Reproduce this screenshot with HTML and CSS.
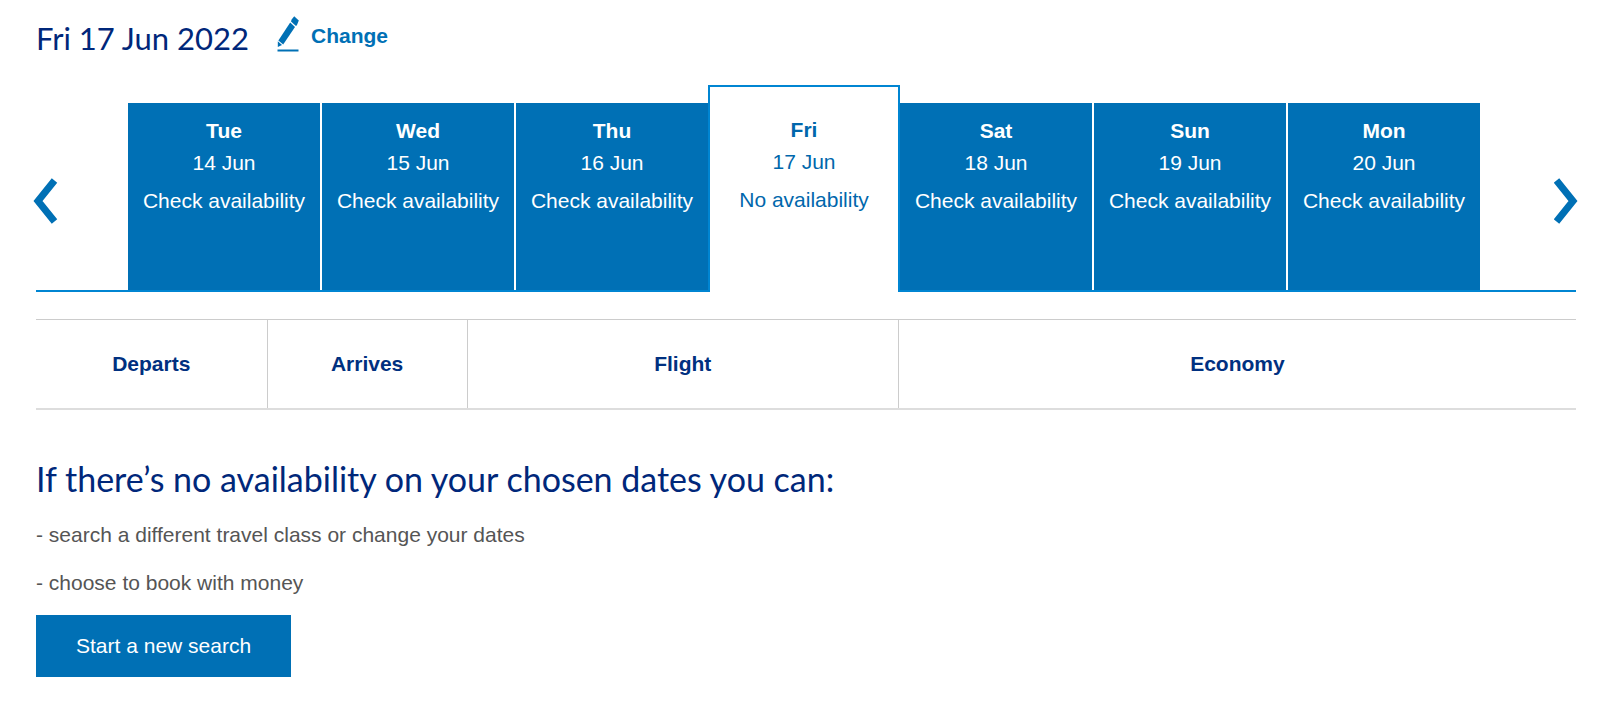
FILE: index.html
```html
<!DOCTYPE html>
<html lang="en">
<head>
  <meta charset="UTF-8">
  <meta name="viewport" content="width=device-width, initial-scale=1.0">
  <title>Flight availability</title>
  <link rel="stylesheet" href="styles.css">
</head>
<body>
  <main class="page">
    <header class="date-header">
      <h1>Fri 17 Jun 2022</h1>
      <a href="#" class="change-link">
        <svg class="icon-edit" width="24" height="36" viewBox="0 0 24 36" aria-hidden="true">
          <path d="M17.2 0.3 L21.8 4.5 L19.8 9.4 L18.6 9.8 L14 5.6 L14.6 3.6 Z"/>
          <path d="M13.2 6.6 L18 11 L6.2 28.6 L1.4 24.4 Z"/>
          <path d="M0.8 25.2 L5 29 L0.8 31 Z"/>
          <path d="M0.5 33.5 H21.5 V35.5 H0.5 Z"/>
        </svg>
        <span>Change</span>
      </a>
    </header>

    <nav class="date-nav" aria-label="Dates">
      <button type="button" class="arrow arrow-prev" aria-label="Previous dates">
        <svg width="25" height="46" viewBox="0 0 25 46"><path d="M21.5 2.5 L5 23 L21.5 43.5"/></svg>
      </button>
      <div class="days">
        <button type="button" class="day">
          <strong>Tue</strong>
          <span>14 Jun</span>
          <span class="status">Check availability</span>
        </button>
        <button type="button" class="day">
          <strong>Wed</strong>
          <span>15 Jun</span>
          <span class="status">Check availability</span>
        </button>
        <button type="button" class="day">
          <strong>Thu</strong>
          <span>16 Jun</span>
          <span class="status">Check availability</span>
        </button>
        <button type="button" class="day selected">
          <strong>Fri</strong>
          <span>17 Jun</span>
          <span class="status">No availability</span>
        </button>
        <button type="button" class="day">
          <strong>Sat</strong>
          <span>18 Jun</span>
          <span class="status">Check availability</span>
        </button>
        <button type="button" class="day">
          <strong>Sun</strong>
          <span>19 Jun</span>
          <span class="status">Check availability</span>
        </button>
        <button type="button" class="day">
          <strong>Mon</strong>
          <span>20 Jun</span>
          <span class="status">Check availability</span>
        </button>
      </div>
      <button type="button" class="arrow arrow-next" aria-label="Next dates">
        <svg width="25" height="46" viewBox="0 0 25 46"><path d="M2.5 2.5 L19 23 L2.5 43.5"/></svg>
      </button>
    </nav>

    <table class="flights">
      <thead>
        <tr>
          <th class="col-departs" scope="col">Departs</th>
          <th class="col-arrives" scope="col">Arrives</th>
          <th class="col-flight" scope="col">Flight</th>
          <th class="col-economy" scope="col">Economy</th>
        </tr>
      </thead>
    </table>

    <section class="no-availability">
      <h2>If there’s no availability on your chosen dates you can:</h2>
      <p>- search a different travel class or change your dates</p>
      <p>- choose to book with money</p>
      <button type="button" class="btn-search">Start a new search</button>
    </section>
  </main>
</body>
</html>
```

FILE: styles.css
```css
* {
  margin: 0;
  padding: 0;
  box-sizing: border-box;
}

body {
  font-family: "Liberation Sans", Arial, Helvetica, sans-serif;
  font-size: 21px;
  line-height: 32px;
  color: #555;
  background: #fff;
}

button {
  font: inherit;
  border: none;
  cursor: pointer;
}

.page {
  padding: 16px 24px 28px 36px;
}

h1,
h2 {
  font-family: Lato, "Open Sans", sans-serif;
  font-weight: 400;
  font-size: 34px;
  line-height: 44px;
  color: #00277a;
}

.date-header {
  display: flex;
  align-items: flex-start;
  gap: 28px;
}

.date-header h1 {
  font-size: 31px;
}

.change-link {
  display: flex;
  align-items: center;
  gap: 10px;
  font-weight: bold;
  line-height: 40px;
  color: #0070b5;
  text-decoration: none;
}

.icon-edit {
  margin-top: -4px;
  fill: #0070b5;
}

/* Date tabs */
.date-nav {
  display: flex;
  margin-top: 25px;
  border-bottom: 2px solid #0085d2;
}

.days {
  flex: 1;
  display: flex;
}

.day {
  flex: 1 1 100px;
  display: flex;
  flex-direction: column;
  align-items: center;
  min-height: 187px;
  margin-top: 18px;
  padding-top: 12px;
  color: #fff;
  background: #0070b5;
}

.day + .day {
  margin-left: 2px;
}

.status {
  margin-top: 6px;
}

/* the open tab covers the line under the row */
.day.selected {
  margin: 0 0 -2px;
  padding-top: 27px;
  color: #0067ac;
  background: #fff;
  border: 2px solid #0085d2;
  border-bottom: none;
}

.day.selected + .day {
  margin-left: 0;
}

.arrow {
  display: flex;
  align-items: center;
  width: 92px;
  padding-top: 26px;
  background: none;
}

.arrow-next {
  justify-content: flex-end;
  width: 96px;
}

.arrow svg {
  margin: 0 -3px;
  fill: none;
  stroke: #0070b5;
  stroke-width: 7;
}

/* Flight list header */
.flights {
  width: 100%;
  margin-top: 27px;
  border-collapse: collapse;
  table-layout: fixed;
  border-top: 1px solid #ccc;
  border-bottom: 2px solid #ddd;
}

.flights th {
  height: 89px;
  color: #003080;
}

.flights th + th {
  border-left: 1px solid #ccc;
}

.col-departs {
  width: 15%;
}

.col-arrives {
  width: 13%;
}

.col-flight {
  width: 28%;
}

.no-availability {
  margin-top: 47px;
}

.no-availability h2 {
  margin-bottom: 18px;
}

.no-availability p {
  margin-bottom: 16px;
}

.btn-search {
  padding: 15px 40px;
  color: #fff;
  background: #0070b5;
}
```
